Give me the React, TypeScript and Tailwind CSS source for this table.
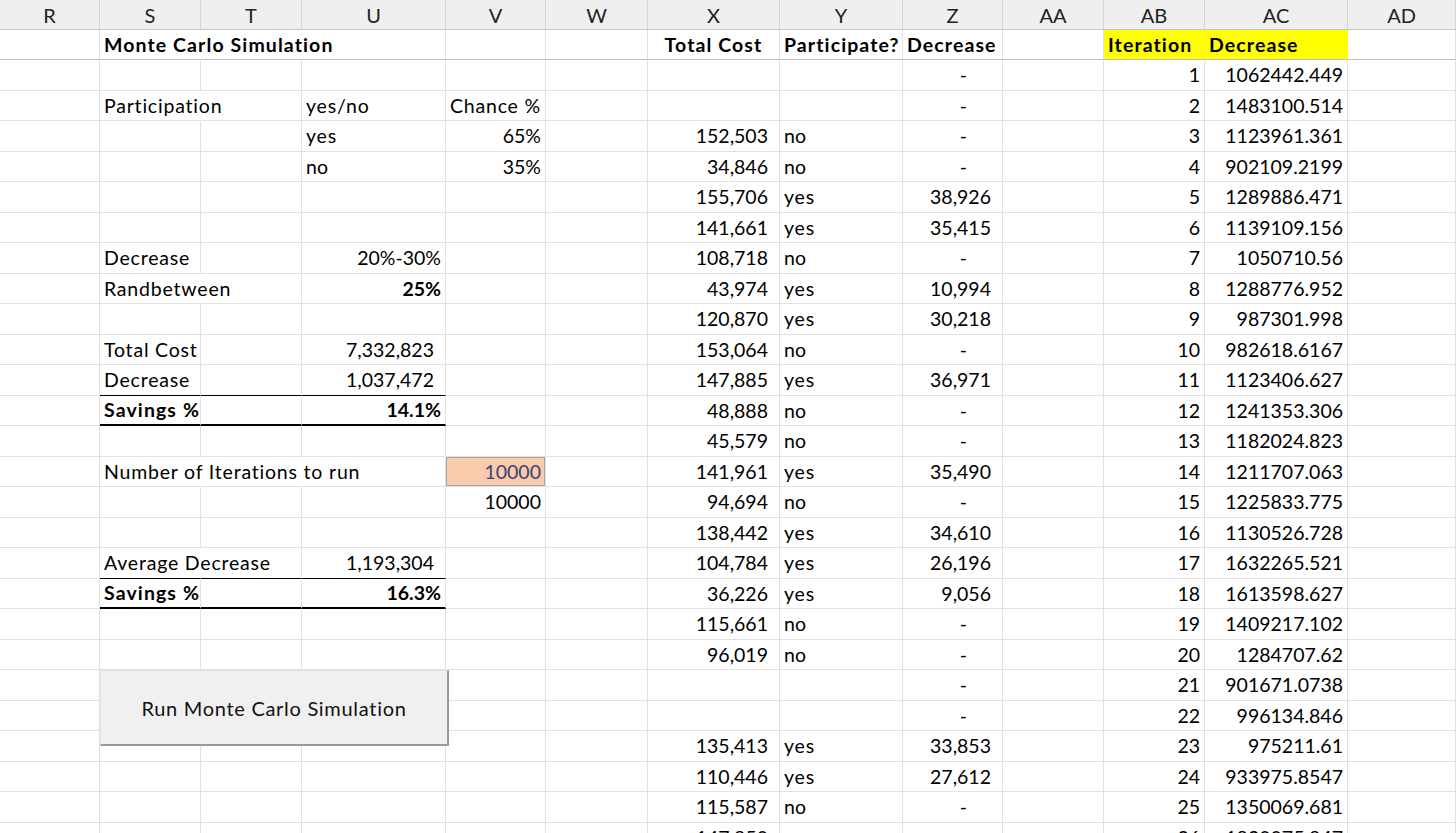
import React from "react";

type Align = "l" | "r" | "n" | "d" | "c";

interface Cell {
  t?: string;
  a?: Align;
  b?: boolean;
  noR?: boolean;
  ul?: "thin" | "thick";
  fill?: "y" | "o";
}

const COLS = ["R", "S", "T", "U", "V", "W", "X", "Y", "Z", "AA", "AB", "AC", "AD"];
const GRID =
  "grid grid-cols-[100px_101px_101px_144px_100px_102px_132px_123px_100px_101px_101px_143px_108px]";

// X / Y / Z columns, rows 2..27
const costs: [string, string, string][] = [
  ["", "", "-"],
  ["", "", "-"],
  ["152,503", "no", "-"],
  ["34,846", "no", "-"],
  ["155,706", "yes", "38,926"],
  ["141,661", "yes", "35,415"],
  ["108,718", "no", "-"],
  ["43,974", "yes", "10,994"],
  ["120,870", "yes", "30,218"],
  ["153,064", "no", "-"],
  ["147,885", "yes", "36,971"],
  ["48,888", "no", "-"],
  ["45,579", "no", "-"],
  ["141,961", "yes", "35,490"],
  ["94,694", "no", "-"],
  ["138,442", "yes", "34,610"],
  ["104,784", "yes", "26,196"],
  ["36,226", "yes", "9,056"],
  ["115,661", "no", "-"],
  ["96,019", "no", "-"],
  ["", "", "-"],
  ["", "", "-"],
  ["135,413", "yes", "33,853"],
  ["110,446", "yes", "27,612"],
  ["115,587", "no", "-"],
  ["147,850", "no", "-"],
];

const iterations = [
  "1062442.449", "1483100.514", "1123961.361", "902109.2199", "1289886.471",
  "1139109.156", "1050710.56", "1288776.952", "987301.998", "982618.6167",
  "1123406.627", "1241353.306", "1182024.823", "1211707.063", "1225833.775",
  "1130526.728", "1632265.521", "1613598.627", "1409217.102", "1284707.62",
  "901671.0738", "996134.846", "975211.61", "933975.8547", "1350069.681",
  "1820075.847",
];

// left block, keyed by row number then column index
const left: Record<number, Record<number, Cell>> = {
  1: {
    1: { t: "Monte Carlo Simulation", b: true, noR: true },
    2: { noR: true },
  },
  3: {
    1: { t: "Participation", noR: true },
    3: { t: "yes/no" },
    4: { t: "Chance %" },
  },
  4: { 3: { t: "yes" }, 4: { t: "65%", a: "r" } },
  5: { 3: { t: "no" }, 4: { t: "35%", a: "r" } },
  8: { 1: { t: "Decrease" }, 3: { t: "20%-30%", a: "r" } },
  9: { 1: { t: "Randbetween", noR: true }, 3: { t: "25%", a: "r", b: true } },
  11: { 1: { t: "Total Cost" }, 3: { t: "7,332,823", a: "n" } },
  12: {
    1: { t: "Decrease", ul: "thin" },
    2: { ul: "thin" },
    3: { t: "1,037,472", a: "n", ul: "thin" },
  },
  13: {
    1: { t: "Savings %", b: true, ul: "thick" },
    2: { ul: "thick" },
    3: { t: "14.1%", a: "r", b: true, ul: "thick" },
  },
  15: {
    1: { t: "Number of Iterations to run", noR: true },
    2: { noR: true },
    4: { t: "10000", a: "r", fill: "o" },
  },
  16: { 4: { t: "10000", a: "r" } },
  18: {
    1: { t: "Average Decrease", noR: true, ul: "thin" },
    2: { ul: "thin" },
    3: { t: "1,193,304", a: "n", ul: "thin" },
  },
  19: {
    1: { t: "Savings %", b: true, ul: "thick" },
    2: { ul: "thick" },
    3: { t: "16.3%", a: "r", b: true, ul: "thick" },
  },
};

function rowCells(r: number): Cell[] {
  const cells: Cell[] = COLS.map((_, i) => ({ ...(left[r]?.[i] ?? {}) }));
  if (r === 1) {
    cells[6] = { t: "Total Cost", b: true, a: "c" };
    cells[7] = { t: "Participate?", b: true };
    cells[8] = { t: "Decrease", b: true };
    cells[10] = { t: "Iteration", b: true, fill: "y" };
    cells[11] = { t: "Decrease", b: true, fill: "y" };
  } else {
    const [x, y, z] = costs[r - 2];
    cells[6] = { t: x, a: "n" };
    cells[7] = { t: y };
    cells[8] = { t: z, a: z === "-" ? "d" : "n" };
    cells[10] = { t: String(r - 1), a: "r" };
    cells[11] = { t: iterations[r - 2], a: "r" };
  }
  return cells;
}

function alignClass(a: Align | undefined) {
  switch (a) {
    case "r":
      return "justify-end pr-1";
    case "n":
      return "justify-end pr-[11px]";
    case "d":
      return "justify-end pr-[35px]";
    case "c":
      return "justify-center";
    default:
      return "justify-start pl-1";
  }
}

function SheetCell({ c, row }: { c: Cell; row: number }) {
  const right = c.fill === "y" ? "border-r-[#ffff00]" : c.noR ? "border-r-transparent" : "border-r-[#e1e1e1]";
  const bottom =
    c.ul === "thick"
      ? "border-b-2 border-b-black"
      : c.ul === "thin"
        ? "border-b border-b-black"
        : row === 1
          ? "border-b border-b-[#bdbdbd]"
          : "border-b border-b-[#e1e1e1]";
  const bg = c.fill === "y" ? "bg-[#ffff00]" : c.fill === "o" ? "bg-[#f8cbad] shadow-[inset_0_0_0_1px_#a5a5a5]" : "";
  const color = c.fill === "o" ? "text-[#3f3f76]" : "text-black";
  // Lato's lowercase runs narrower than the sheet's font, so words get a little spacing
  const wordy = c.t && /[a-z]{3,}/i.test(c.t);
  const tracking = wordy ? (c.b ? "tracking-[1.1px]" : "tracking-[0.8px]") : "";
  return (
    <div
      className={`flex items-center whitespace-nowrap border-r ${right} ${bottom} ${bg} ${color} ${alignClass(c.a)} ${
        c.b ? "font-bold" : "font-normal"
      }`}
    >
      {c.t ? <span className={`relative z-10 ${tracking}`}>{c.t}</span> : null}
    </div>
  );
}

export default function App() {
  const rows = Array.from({ length: 27 }, (_, i) => i + 1);

  return (
    <div className="relative w-[1456px] h-[833px] overflow-hidden bg-white font-['Lato',sans-serif] text-[19.5px] leading-[24px]">
      {/* Column letters */}
      <div className={`${GRID} h-[30px] bg-[#efefef] border-b border-b-[#c6c6c6]`}>
        {COLS.map((c) => (
          <div
            key={c}
            className="flex items-center justify-center border-r border-r-[#d4d4d4] text-[20px] text-[#222]"
          >
            {c}
          </div>
        ))}
      </div>

      {/* Sheet rows */}
      {rows.map((r) => (
        <div key={r} className={`${GRID} ${r % 2 === 1 ? "h-[30px]" : "h-[31px]"}`}>
          {rowCells(r).map((c, i) => (
            <SheetCell key={i} c={c} row={r} />
          ))}
        </div>
      ))}

      {/* Form control button floating over the sheet */}
      <button className="absolute left-[100px] top-[670px] w-[349px] h-[76px] bg-[#f0f0f0] border border-[#e2e2e2] border-r-2 border-b-2 border-r-[#9a9a9a] border-b-[#9a9a9a] text-[20px] tracking-[0.7px] text-[#111] font-normal">
        Run Monte Carlo Simulation
      </button>
    </div>
  );
}
